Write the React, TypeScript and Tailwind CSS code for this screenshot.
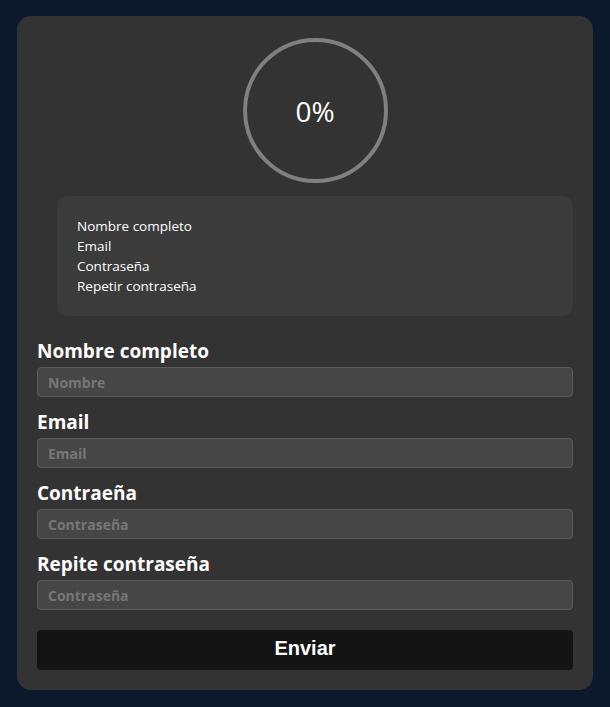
import React, { useState } from 'react';

const fields = [
  { label: 'Nombre completo', placeholder: 'Nombre', type: 'text' },
  { label: 'Email', placeholder: 'Email', type: 'email' },
  { label: 'Contraeña', placeholder: 'Contraseña', type: 'password' },
  { label: 'Repite contraseña', placeholder: 'Contraseña', type: 'password' },
];

const requirements = ['Nombre completo', 'Email', 'Contraseña', 'Repetir contraseña'];

const App: React.FC = () => {
  const [values, setValues] = useState<string[]>(['', '', '', '']);
  const progress = Math.round((values.filter((v) => v.trim() !== '').length / fields.length) * 100);

  return (
    <div
      className="min-h-screen bg-[#0c182c] pt-4 pb-4 pl-[17px]"
      style={{ fontFamily: '"Open Sans", "Noto Sans", sans-serif' }}
    >
      <div className="w-[576px] rounded-[14px] bg-[#333333] px-5 pt-[22px] pb-5">
        {/* Progress + requirements */}
        <div className="ml-5">
          <div className="flex justify-center">
            <div className="flex h-[145px] w-[145px] items-center justify-center rounded-full border-4 border-[#808080]">
              <span className="text-[28px] leading-none text-white">{progress}%</span>
            </div>
          </div>

          <div className="mt-[13px] rounded-[10px] bg-[#3b3b3b] px-5 py-5">
            <ul className="text-[13.5px] leading-5 text-white">
              {requirements.map((r) => (
                <li key={r}>{r}</li>
              ))}
            </ul>
          </div>
        </div>

        {/* Form */}
        <form className="mt-[23px]" onSubmit={(e) => e.preventDefault()}>
          {fields.map((f, i) => (
            <div key={f.label} className="mb-[13px]">
              <label className="mb-1 block text-[19px] font-bold leading-6 text-white">{f.label}</label>
              <input
                type={f.type}
                placeholder={f.placeholder}
                value={values[i]}
                onChange={(e) => {
                  const next = [...values];
                  next[i] = e.target.value;
                  setValues(next);
                }}
                className="block h-[30px] w-full rounded-[4px] border border-[#5a5a5a] bg-[#464646] px-[10px] text-[14px] font-bold text-white outline-none placeholder:text-[#777777]"
              />
            </div>
          ))}
          <button
            type="submit"
            className="mt-5 block h-10 w-full rounded-[4px] bg-[#141414] pb-1 text-[20px] font-bold text-white"
            style={{ fontFamily: '"Liberation Sans", Arial, sans-serif' }}
          >
            Enviar
          </button>
        </form>
      </div>
    </div>
  );
};

export default App;
